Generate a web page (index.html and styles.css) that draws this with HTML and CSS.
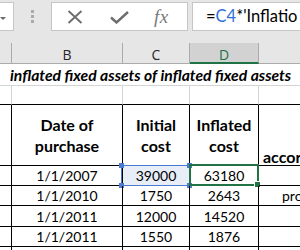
FILE: index.html
```html
<!DOCTYPE html>
<html>
<head>
<meta charset="utf-8">
<link rel="stylesheet" href="styles.css">
</head>
<body>
<div class="app">
  <div class="fbar">
    <div class="namebox"><span class="caret"></span></div>
    <div class="grip"><i></i><i></i><i></i></div>
    <div class="fxbox">
      <svg class="ic-x" width="16" height="14" viewBox="0 0 16 14"><path d="M1.5 1 L14.5 13 M14.5 1 L1.5 13" stroke="#6d6d6d" stroke-width="1.9" fill="none"/></svg>
      <svg class="ic-ok" width="19" height="13" viewBox="0 0 19 13"><path d="M1 6.5 L6.5 11.5 L18 1" stroke="#6d6d6d" stroke-width="2.4" fill="none"/></svg>
      <span class="fx">fx</span>
    </div>
    <div class="finput">=<span class="ref">C4</span>*'Inflatio</div>
  </div>
  <div class="colheads">
    <div class="ch"></div>
    <div class="ch">B</div>
    <div class="ch">C</div>
    <div class="ch sel">D</div>
    <div class="ch last"></div>
  </div>
  <div class="sheet">
    <div class="c title">inflated fixed assets of inflated fixed assets</div>

    <div class="c g"></div><div class="c g"></div><div class="c g"></div><div class="c g"></div><div class="c g last"></div>

    <div class="c b"></div>
    <div class="c b hd">Date of<br>purchase</div>
    <div class="c b hd">Initial<br>cost</div>
    <div class="c b hd">Inflated<br>cost</div>
    <div class="c b hd e">accor</div>

    <div class="c b"></div><div class="c b">1/1/2007</div><div class="c b refc"><span class="hl"><i class="h1"></i><i class="h2"></i><i class="h3"></i><i class="h4"></i></span>39000</div><div class="c b act"><span class="sl"><i></i></span>63180</div><div class="c b e"></div>

    <div class="c b"></div><div class="c b">1/1/2010</div><div class="c b">1750</div><div class="c b">2643</div><div class="c b e l">pro</div>

    <div class="c b"></div><div class="c b">1/1/2011</div><div class="c b">12000</div><div class="c b">14520</div><div class="c b e"></div>

    <div class="c b"></div><div class="c b">1/1/2011</div><div class="c b">1550</div><div class="c b">1876</div><div class="c b e"></div>

    <div class="c b"></div><div class="c b"></div><div class="c b"></div><div class="c b"></div><div class="c b e"></div>
  </div>
</div>
</body>
</html>
```
FILE: styles.css
```css
html, body { margin: 0; padding: 0; }
body { width: 300px; height: 250px; overflow: hidden; background: #fff; font-family: Lato, "Open Sans", sans-serif; color: #000; }
.app { width: 300px; height: 250px; overflow: hidden; }

.fbar { height: 31px; background: #e6e6e6; display: flex; align-items: flex-start; position: relative; }
.namebox { box-sizing: border-box; width: 14px; height: 29px; margin-top: 2px; background: #fff; border: 1px solid #c6c6c6; border-left: none; position: relative; }
.caret { position: absolute; left: 0; top: 14px; width: 0; height: 0; border-left: 3px solid transparent; border-right: 3px solid transparent; border-top: 3px solid #6a6a6a; }
.grip { width: 3px; margin: 10px 0 0 17px; display: flex; flex-direction: column; gap: 2px; }
.grip i { display: block; width: 3px; height: 3px; background: #ababab; }
.fxbox { box-sizing: border-box; width: 137px; height: 29px; margin: 2px 0 0 17px; background: #fff; border: 1px solid #c6c6c6; display: flex; align-items: center; padding-left: 15px; }
.ic-x { margin-top: 1px; }
.ic-ok { margin-left: 27px; margin-top: 1px; }
.fx { margin-left: 25px; font-family: "Liberation Serif", serif; font-style: italic; font-size: 19px; color: #7a7a7a; letter-spacing: 0.5px; }
.finput { box-sizing: border-box; flex: 1; height: 29px; margin: 2px 0 0 4px; background: #fff; border: 1px solid #c6c6c6; border-right: none; padding-left: 13px; font-size: 16.5px; line-height: 27px; white-space: nowrap; overflow: hidden; }
.ref { color: #2f6fd6; }

.colheads { height: 33px; box-sizing: border-box; padding-top: 12px; background: #e6e6e6; display: grid; grid-template-columns: 12px 111px 67px 69px 1fr; }
.ch { box-sizing: border-box; height: 21px; border-right: 1px solid #ababab; border-bottom: 1px solid #ababab; font-family: "Open Sans", sans-serif; font-size: 14px; padding-top: 3px; color: #262626; display: flex; align-items: center; justify-content: center; }
.ch.last { border-right: none; }
.ch.sel { background: #d2d2d2; color: #217346; border-bottom: 2px solid #217346; padding-top: 4px; }

.sheet { display: grid; grid-template-columns: 12px 111px 67px 69px 1fr; grid-template-rows: 22px 19px 61px 20px 20px 21px 20px 20px; font-size: 14px; }
.c { box-sizing: border-box; display: flex; align-items: center; justify-content: center; white-space: nowrap; overflow: visible; position: relative; }
.title { grid-column: 1 / -1; justify-content: flex-start; padding-left: 10px; font-weight: 700; font-style: italic; font-size: 15.7px; border-bottom: 1px solid #d4d4d4; overflow: hidden; }
.g { border-right: 1px solid #d4d4d4; border-bottom: 1px solid #000; }
.g.last { border-right: none; }
.b { border-right: 1px solid #000; border-bottom: 1px solid #000; }
.b.e { border-right: none; }
.hd { font-weight: 700; font-size: 16px; line-height: 21px; text-align: center; }
.hd.e { align-items: flex-end; justify-content: flex-start; padding: 0 0 0 4px; line-height: 16px; }
.l { justify-content: flex-start; padding-left: 23px; }

.refc { background: #e8eef8; }
.hl { position: absolute; left: -2px; top: -1px; right: -1px; bottom: -1px; border: 1px solid #4a7bd0; }
.hl i { position: absolute; width: 5px; height: 5px; background: #4a7bd0; }
.hl .h1 { left: -3px; top: -3px; }
.hl .h2 { right: -3px; top: -3px; }
.hl .h3 { left: -3px; bottom: -3px; }
.hl .h4 { right: -3px; bottom: -3px; }
.sl { position: absolute; left: -1px; top: -2px; right: -1px; bottom: -1px; border: 2px solid #217346; }
.sl i { position: absolute; right: -4px; bottom: -4px; width: 5px; height: 5px; background: #217346; border: 1px solid #fff; }
```
